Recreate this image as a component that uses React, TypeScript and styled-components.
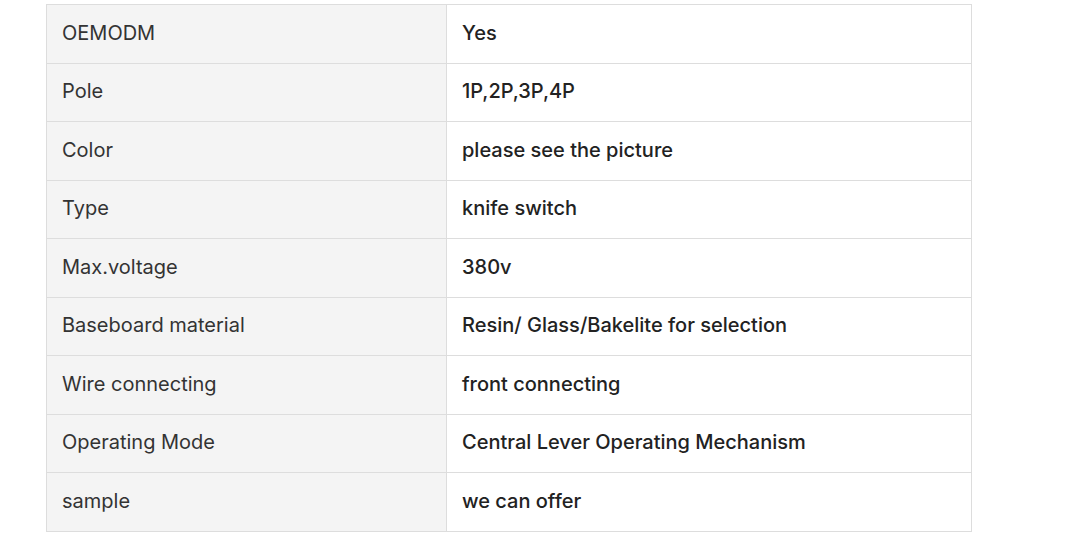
import React from "react";
import styled, { createGlobalStyle } from "styled-components";

const Global = createGlobalStyle`
  html, body { margin: 0; padding: 0; background: #fff; }
  body { font-family: Inter, "Noto Sans", sans-serif; }
`;

const Page = styled.div`
  padding: 4px 0 0 46px;
`;

const Table = styled.table`
  width: 926px;
  border-collapse: collapse;
  table-layout: fixed;
`;

const LabelCol = styled.col`
  width: 400px;
`;

const Row = styled.tr`
  height: 58.5px;
`;

const Cell = styled.td<{ $label?: boolean }>`
  border: 1px solid #dddddd;
  padding: 0 15px 2px;
  font-size: 20px;
  line-height: 26px;
  vertical-align: middle;
  background: ${(p) => (p.$label ? "#f4f4f4" : "#ffffff")};
  color: ${(p) => (p.$label ? "#333333" : "#222222")};
  font-weight: ${(p) => (p.$label ? 400 : 500)};
`;

const rows: [string, string][] = [
  ["OEMODM", "Yes"],
  ["Pole", "1P,2P,3P,4P"],
  ["Color", "please see the picture"],
  ["Type", "knife switch"],
  ["Max.voltage", "380v"],
  ["Baseboard material", "Resin/ Glass/Bakelite for selection"],
  ["Wire connecting", "front connecting"],
  ["Operating Mode", "Central Lever Operating Mechanism"],
  ["sample", "we can offer"],
];

export default function App() {
  return (
    <>
      <Global />
      <Page>
        <Table>
          <colgroup>
            <LabelCol />
            <col />
          </colgroup>
          <tbody>
            {rows.map(([k, v]) => (
              <Row key={k}>
                <Cell $label>{k}</Cell>
                <Cell>{v}</Cell>
              </Row>
            ))}
          </tbody>
        </Table>
      </Page>
    </>
  );
}
